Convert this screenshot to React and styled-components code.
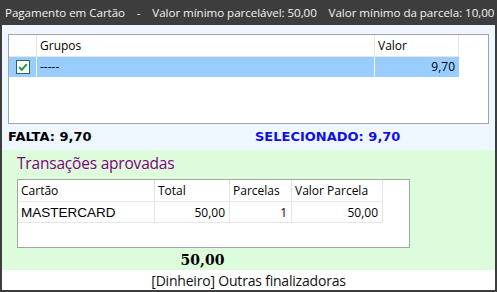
import React from "react";
import styled, { createGlobalStyle } from "styled-components";

const Global = createGlobalStyle`
  html, body { margin: 0; padding: 0; background: #fff; }
  #root { width: 497px; height: 292px; }
`;

const UI = `"Open Sans", "Noto Sans", sans-serif`;

const Window = styled.div`
  width: 497px;
  height: 292px;
  box-sizing: border-box;
  background: #3d3d3d;
  display: flex;
  flex-direction: column;
  overflow: hidden;
`;

const TitleBar = styled.div`
  height: 25px;
  flex: none;
  display: flex;
  align-items: center;
  padding-left: 5px;
  color: #f2f2f2;
  font-family: ${UI};
  font-size: 11.6px;
  white-space: pre;
  letter-spacing: -0.05px;
`;

const Body = styled.div`
  flex: 1;
  margin: 0 2px 2px 2px;
  display: flex;
  flex-direction: column;
  background: #fff;
`;

const UpperPanel = styled.div`
  background: #eef6ff;
  height: 125px;
  flex: none;
  box-sizing: border-box;
  padding: 9px 6px 0 6px;
  display: flex;
  flex-direction: column;
`;

const GridBox = styled.div`
  box-sizing: border-box;
  width: ${(p) => p.$w}px;
  height: ${(p) => p.$h}px;
  border: 1px solid #a3a3a3;
  background: #fff;
  flex: none;
`;

const Row = styled.div`
  display: grid;
  grid-template-columns: ${(p) => p.$cols};
  height: ${(p) => p.$h}px;
`;

const Cell = styled.div`
  box-sizing: border-box;
  border-right: 1px solid ${(p) => (p.$sel ? "#ffffff" : "#e6e6e6")};
  border-bottom: 1px solid ${(p) => (p.$sel ? "#99ccff" : "#e6e6e6")};
  background: ${(p) => (p.$sel ? "#99ccff" : "#fff")};
  display: flex;
  align-items: center;
  justify-content: ${(p) => (p.$right ? "flex-end" : p.$center ? "center" : "flex-start")};
  padding: 0 ${(p) => (p.$right ? "4px" : "0")} 0 ${(p) => (p.$right ? "0" : "3px")};
  font-family: ${(p) => (p.$arial ? `"Liberation Sans", Arial, sans-serif` : UI)};
  font-size: ${(p) => (p.$arial ? "13.5px" : "12px")};
  color: #000;
  white-space: nowrap;
  overflow: hidden;
`;

const Totals = styled.div`
  display: flex;
  align-items: center;
  height: 25px;
  padding-left: 0;
  font-family: "DejaVu Sans", Verdana, sans-serif;
  font-weight: bold;
  font-size: 13px;
`;

const TotalText = styled.span`
  color: ${(p) => p.$color};
  width: ${(p) => p.$w || "auto"};
`;

const GreenPanel = styled.div`
  background: #ddfcdc;
  height: 120px;
  flex: none;
  box-sizing: border-box;
  padding: 0 0 0 15px;
  display: flex;
  flex-direction: column;
`;

const SectionTitle = styled.div`
  font-family: ${UI};
  font-size: 15.5px;
  color: #800080;
  height: 29px;
  line-height: 27px;
  letter-spacing: -0.2px;
`;

const GrandTotal = styled.div`
  width: 371px;
  text-align: center;
  font-family: "DejaVu Serif", "Liberation Serif", serif;
  font-weight: bold;
  font-size: 14px;
  margin-top: 4px;
  color: #000;
`;

const Footer = styled.div`
  flex: 1;
  display: flex;
  align-items: center;
  justify-content: center;
  padding-top: 1px;
  font-family: ${UI};
  font-size: 14px;
  color: #111;
  letter-spacing: -0.2px;
`;

const CheckIcon = () => (
  <svg width="14" height="14" viewBox="0 0 14 14">
    <rect x="0.5" y="0.5" width="13" height="13" fill="#fff" stroke="#1b6b56" />
    <path d="M3.2 7.2 L5.8 9.8 L10.8 4.2" fill="none" stroke="#1f9a3a" strokeWidth="2" />
  </svg>
);

export default function App() {
  const c1 = "28px 338px 84px";
  const c2 = "137px 75px 62px 91px";
  return (
    <>
      <Global />
      <Window>
        <TitleBar>{"Pagamento em Cartão    -    Valor mínimo parcelável: 50,00    Valor mínimo da parcela: 10,00"}</TitleBar>
        <Body>
          <UpperPanel>
            <GridBox $w={481} $h={90}>
              <Row $cols={c1} $h={22}>
                <Cell />
                <Cell>Grupos</Cell>
                <Cell>Valor</Cell>
              </Row>
              <Row $cols={c1} $h={20}>
                <Cell $sel $center style={{ paddingLeft: 0 }}>
                  <CheckIcon />
                </Cell>
                <Cell $sel>-----</Cell>
                <Cell $sel $right style={{ borderRight: "none" }}>9,70</Cell>
              </Row>
            </GridBox>
            <Totals>
              <TotalText $color="#000" $w="247px">FALTA: 9,70</TotalText>
              <TotalText $color="#1010e6">SELECIONADO: 9,70</TotalText>
            </Totals>
          </UpperPanel>
          <GreenPanel>
            <SectionTitle>Transações aprovadas</SectionTitle>
            <GridBox $w={393} $h={69}>
              <Row $cols={c2} $h={22}>
                <Cell>Cartão</Cell>
                <Cell>Total</Cell>
                <Cell>Parcelas</Cell>
                <Cell>Valor Parcela</Cell>
              </Row>
              <Row $cols={c2} $h={21}>
                <Cell $arial>MASTERCARD</Cell>
                <Cell $right>50,00</Cell>
                <Cell $right>1</Cell>
                <Cell $right>50,00</Cell>
              </Row>
            </GridBox>
            <GrandTotal>50,00</GrandTotal>
          </GreenPanel>
          <Footer>[Dinheiro] Outras finalizadoras</Footer>
        </Body>
      </Window>
    </>
  );
}
